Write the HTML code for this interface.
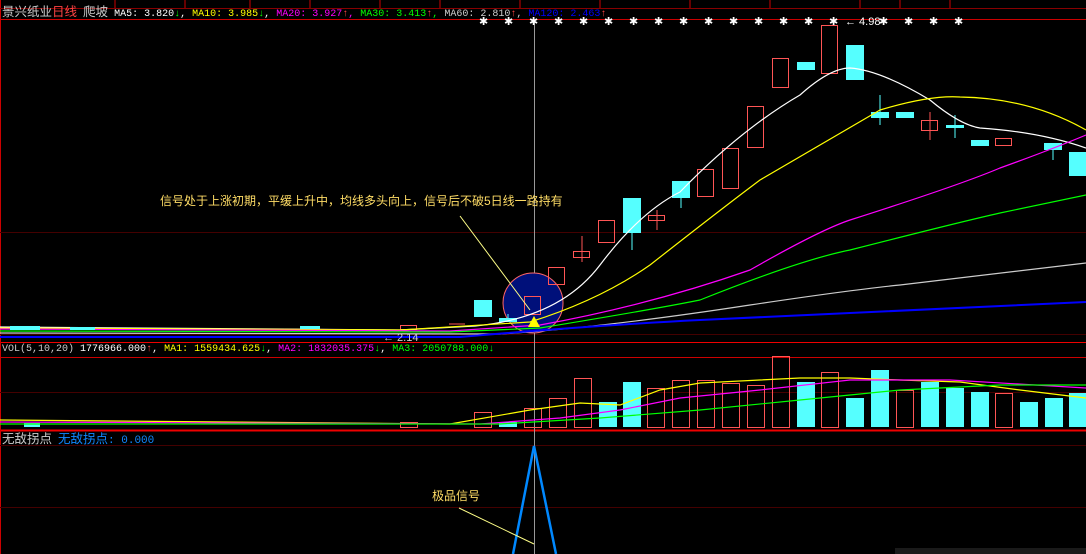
<!DOCTYPE html><html><head><meta charset="utf-8"><style>
body{margin:0;background:#000;width:1086px;height:554px;overflow:hidden;position:relative;font-family:"Liberation Mono","Noto Sans CJK SC",monospace}
.t{position:absolute;font-size:10px;white-space:nowrap;line-height:14px}
.c{font-family:"Liberation Sans","Noto Sans CJK SC",sans-serif;font-size:12.5px}
</style></head><body>
<svg width="1086" height="554" style="position:absolute;left:0;top:0">
<g stroke="#c00" stroke-width="1" fill="none">
<line x1="0" y1="19.5" x2="1086" y2="19.5"/>
<line x1="0" y1="342.5" x2="1086" y2="342.5" stroke="#e00"/>
<line x1="0" y1="357.5" x2="1086" y2="357.5"/>
<line x1="0" y1="430.5" x2="1086" y2="430.5" stroke="#e00" stroke-width="2"/>
<line x1="0.5" y1="0" x2="0.5" y2="554"/>
<line x1="0" y1="8.5" x2="1086" y2="8.5" stroke="#800"/>
</g>
<g stroke="#c00"><line x1="115" y1="0" x2="115" y2="8"/><line x1="185" y1="0" x2="185" y2="8"/><line x1="250" y1="0" x2="250" y2="8"/><line x1="310" y1="0" x2="310" y2="8"/><line x1="380" y1="0" x2="380" y2="8"/><line x1="440" y1="0" x2="440" y2="8"/><line x1="520" y1="0" x2="520" y2="8"/><line x1="600" y1="0" x2="600" y2="8"/><line x1="690" y1="0" x2="690" y2="8"/><line x1="770" y1="0" x2="770" y2="8"/><line x1="860" y1="0" x2="860" y2="8"/><line x1="900" y1="0" x2="900" y2="8"/><line x1="950" y1="0" x2="950" y2="8"/></g>
<g stroke="#400" stroke-width="1"><line x1="0" y1="232.5" x2="1086" y2="232.5"/><line x1="0" y1="334.5" x2="1086" y2="334.5"/><line x1="0" y1="392.5" x2="1086" y2="392.5"/><line x1="0" y1="445.5" x2="1086" y2="445.5"/><line x1="0" y1="507.5" x2="1086" y2="507.5"/></g>
<line x1="534.5" y1="20" x2="534.5" y2="554" stroke="#999"/>
<g fill="#fff" font-size="11" font-family="Liberation Sans">
<text x="479" y="25">✱</text><text x="504" y="25">✱</text><text x="529" y="25">✱</text><text x="554" y="25">✱</text><text x="579" y="25">✱</text><text x="604" y="25">✱</text><text x="629" y="25">✱</text><text x="654" y="25">✱</text><text x="679" y="25">✱</text><text x="704" y="25">✱</text><text x="729" y="25">✱</text><text x="754" y="25">✱</text><text x="779" y="25">✱</text><text x="804" y="25">✱</text><text x="829" y="25">✱</text><text x="879" y="25">✱</text><text x="904" y="25">✱</text><text x="929" y="25">✱</text><text x="954" y="25">✱</text>
<text x="845" y="25" font-size="11">← 4.98</text>
</g>
<circle cx="533" cy="303" r="30" fill="#00107a" stroke="#f66"/>
<g fill="#5ff">
<rect x="474" y="300" width="18" height="17"/><rect x="499" y="318" width="18" height="4"/>
<rect x="623" y="198" width="18" height="35"/><rect x="672" y="181" width="18" height="17"/>
<rect x="797" y="62" width="18" height="8"/><rect x="846" y="45" width="18" height="35"/>
<rect x="871" y="112" width="18" height="6"/><rect x="896" y="112" width="18" height="6"/>
<rect x="946" y="125" width="18" height="3"/><rect x="971" y="140" width="18" height="6"/>
<rect x="1044" y="143" width="18" height="7"/><rect x="1069" y="152" width="18" height="24"/>
</g>
<g stroke="#5ff"><line x1="632" y1="233" x2="632" y2="250"/><line x1="681" y1="198" x2="681" y2="208"/><line x1="880" y1="95" x2="880" y2="125"/><line x1="508" y1="314" x2="508" y2="318"/><line x1="1053" y1="150" x2="1053" y2="160"/><line x1="955" y1="115" x2="955" y2="138"/></g>
<g fill="none" stroke="#f55">
<rect x="524.5" y="296.5" width="16" height="18"/><rect x="548.5" y="267.5" width="16" height="17"/>
<rect x="573.5" y="251.5" width="16" height="6"/><line x1="582" y1="236" x2="582" y2="262"/>
<rect x="598.5" y="220.5" width="16" height="22"/><rect x="648.5" y="215.5" width="16" height="5"/><line x1="657" y1="210" x2="657" y2="230"/>
<rect x="697.5" y="169.5" width="16" height="27"/><rect x="722.5" y="148.5" width="16" height="40"/>
<rect x="747.5" y="106.5" width="16" height="41"/><rect x="772.5" y="58.5" width="16" height="29"/>
<rect x="821.5" y="25.5" width="16" height="48"/><rect x="921.5" y="120.5" width="16" height="10"/>
<rect x="995.5" y="138.5" width="16" height="7"/><line x1="930" y1="112" x2="930" y2="140"/>
<rect x="400.5" y="325.5" width="16" height="4"/><line x1="449" y1="324" x2="465" y2="324"/>
</g>
<g fill="none" stroke-width="1.2" stroke-linejoin="round">
<path stroke="#fff" d="M0,327 L400,330 L475,326 Q560,318 600,265 T680,192 Q740,130 800,95 Q830,68 850,68 Q880,70 930,100 Q960,125 980,128 Q1040,132 1086,148"/>
<path stroke="#ff0" d="M0,328 L400,330 L530,322 Q600,300 650,265 Q720,210 760,180 Q820,145 880,110 Q930,95 960,97 Q1030,98 1086,130"/>
<path stroke="#f0f" d="M0,329 L450,331 L540,325 Q650,305 750,270 Q820,230 850,220 Q960,185 1000,168 Q1050,150 1086,135"/>
<path stroke="#0f0" d="M0,331 L450,332 L540,328 Q650,310 700,300 Q800,260 850,250 Q960,222 1000,213 L1086,195"/>
<path stroke="#ccc" d="M0,333 L500,334 Q600,328 750,305 Q850,290 900,285 L1086,263"/>
<path stroke="#00f" stroke-width="2" d="M0,337 L460,337 Q600,325 700,320 L1086,302"/>
</g>
<g fill="#5ff"><rect x="10" y="326" width="30" height="4"/><rect x="70" y="327" width="25" height="3"/><rect x="300" y="326" width="20" height="3"/></g>
<polygon points="528,327 534,316 540,327" fill="#ff0"/>
<line x1="460" y1="216" x2="530" y2="310" stroke="#ff8"/>
<text x="383" y="341" fill="#ccc" font-size="11" font-family="Liberation Sans">← 2.14</text>
<g fill="none" stroke="#f55">
<rect x="474.5" y="412.5" width="17" height="15"/><rect x="524.5" y="408.5" width="17" height="19"/><rect x="549.5" y="398.5" width="17" height="29"/>
<rect x="574.5" y="378.5" width="17" height="49"/><rect x="647.5" y="388.5" width="17" height="39"/><rect x="672.5" y="380.5" width="17" height="47"/>
<rect x="697.5" y="380.5" width="17" height="47"/><rect x="722.5" y="383.5" width="17" height="44"/><rect x="747.5" y="385.5" width="17" height="42"/>
<rect x="772.5" y="356.5" width="17" height="71"/><rect x="821.5" y="372.5" width="17" height="55"/><rect x="896.5" y="390.5" width="17" height="37"/>
<rect x="995.5" y="393.5" width="17" height="34"/><rect x="400.5" y="422.5" width="17" height="5"/>
</g>
<g fill="#5ff"><rect x="599" y="402" width="18" height="25"/><rect x="623" y="382" width="18" height="45"/><rect x="797" y="382" width="18" height="45"/>
<rect x="846" y="398" width="18" height="29"/><rect x="871" y="370" width="18" height="57"/><rect x="921" y="382" width="18" height="45"/>
<rect x="946" y="388" width="18" height="39"/><rect x="971" y="392" width="18" height="35"/><rect x="1020" y="402" width="18" height="25"/>
<rect x="1045" y="398" width="18" height="29"/><rect x="1069" y="393" width="18" height="34"/><rect x="24" y="423" width="16" height="4"/><rect x="499" y="422" width="18" height="5"/></g>
<g fill="none" stroke-width="1.2">
<polyline stroke="#ff0" points="0,420 450,424 530,410 580,403 620,405 660,390 700,383 760,380 800,378 850,378 900,380 960,382 1020,390 1086,398"/>
<polyline stroke="#f0f" points="0,422 480,424 560,418 620,410 680,398 760,390 850,380 950,380 1086,388"/>
<polyline stroke="#0f0" points="0,424 500,424 600,418 700,410 800,400 900,390 1000,385 1086,385"/>
</g>
<polyline points="513,554 534,446 556,554" fill="none" stroke="#08f" stroke-width="2.5"/>
<line x1="459" y1="508" x2="534" y2="544" stroke="#ff8"/>
<rect x="895" y="548" width="191" height="6" fill="#1a1a1a"/>
</svg>
<div class="t" style="left:2px;top:5px"><span class="c" style="color:#ccc">景兴纸业</span><span class="c" style="color:#f44">日线</span> <span class="c" style="color:#ccc">爬坡</span> <span style="color:#fff">MA5: 3.820</span><span style="color:#0f0">↓</span><span style="color:#fff">,</span> <span style="color:#ff0">MA10: 3.985</span><span style="color:#0f0">↓</span><span style="color:#fff">,</span> <span style="color:#f0f">MA20: 3.927</span><span style="color:#f44">↑</span><span style="color:#f0f">,</span> <span style="color:#0f0">MA30: 3.413</span><span style="color:#f44">↑</span><span style="color:#0f0">,</span> <span style="color:#ccc">MA60: 2.810</span><span style="color:#f44">↑</span><span style="color:#ccc">,</span> <span style="color:#00f">MA120: 2.463</span><span style="color:#f44">↑</span></div>
<div class="t" style="left:2px;top:343px"><span style="color:#ccc">VOL(5,10,20)</span> <span style="color:#fff">1776966.000</span><span style="color:#f44">↑</span><span style="color:#fff">,</span> <span style="color:#ff0">MA1: 1559434.625</span><span style="color:#0f0">↓</span><span style="color:#fff">,</span> <span style="color:#f0f">MA2: 1832035.375</span><span style="color:#0f0">↓</span><span style="color:#fff">,</span> <span style="color:#0f0">MA3: 2050788.000</span><span style="color:#0f0">↓</span></div>
<div class="t" style="left:2px;top:432px"><span class="c" style="color:#ccc">无敌拐点</span> <span class="c" style="color:#18f">无敌拐点</span><span style="color:#18f;font-size:11px">: 0.000</span></div>
<div class="t c" style="left:160px;top:194px;color:#fd6;font-size:12px">信号处于上涨初期，平缓上升中，均线多头向上，信号后不破5日线一路持有</div>
<div class="t c" style="left:432px;top:489px;color:#fd6;font-size:12px">极品信号</div>
</body></html>
